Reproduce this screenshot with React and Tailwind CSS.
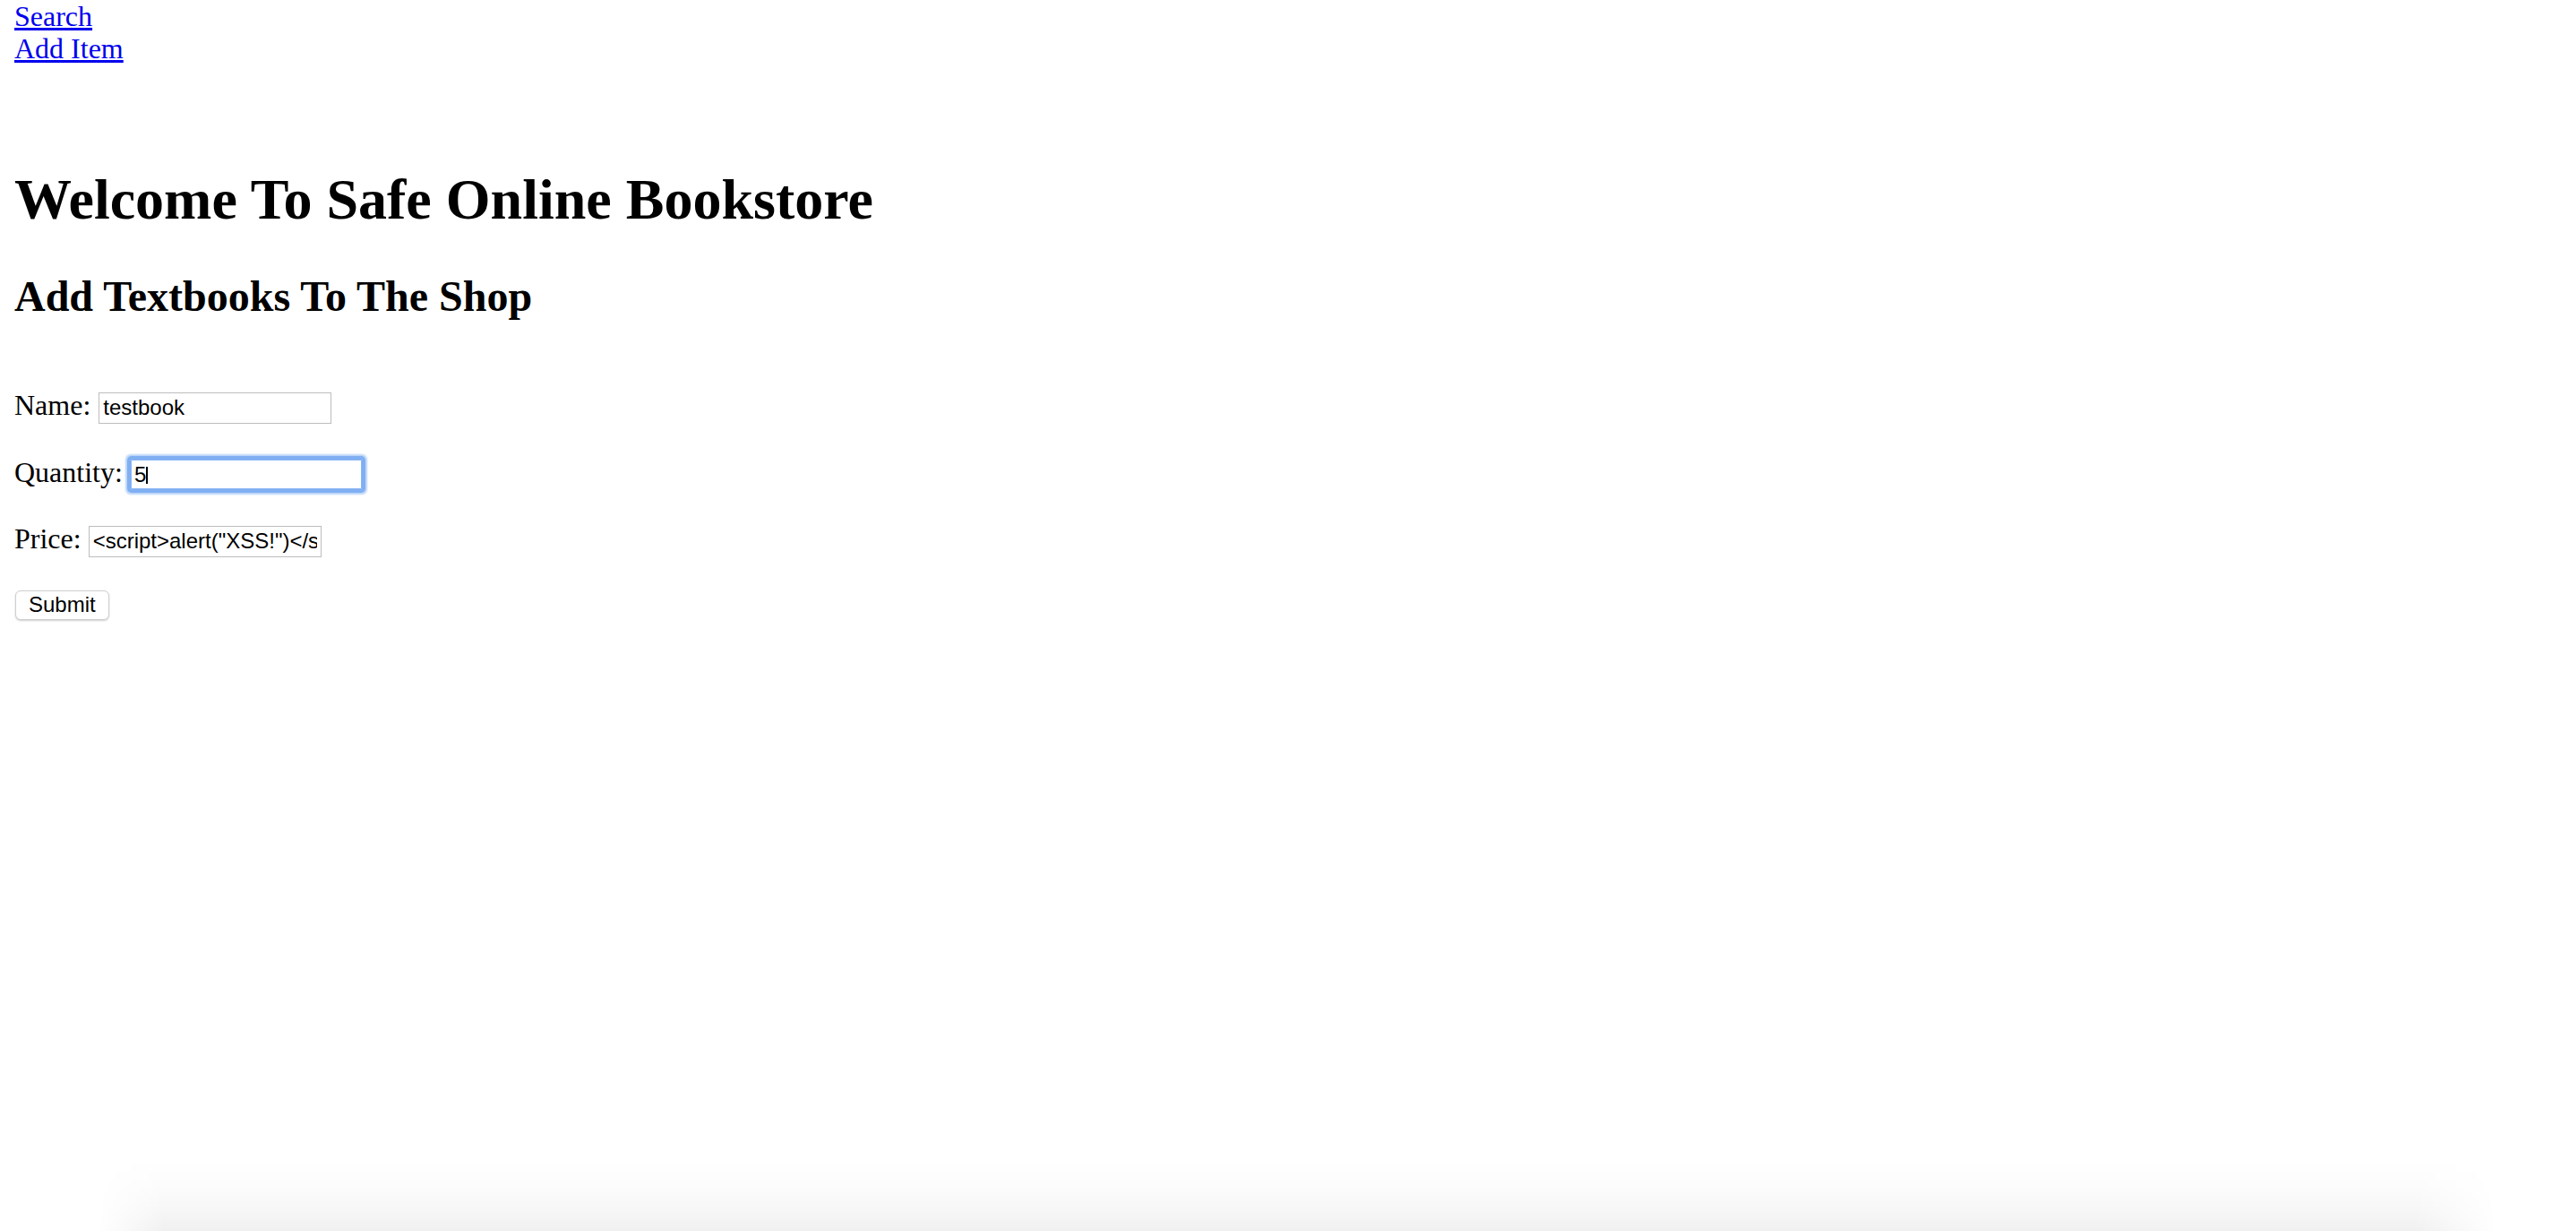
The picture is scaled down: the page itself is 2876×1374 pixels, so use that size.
import React from "react";

export default function App() {
  const inputBase =
    "w-[260px] h-[35px] border border-[#bdbdbd] bg-white px-[4px] py-0 text-[24px] text-black font-['Liberation_Sans',Arial,sans-serif] outline-none";
  return (
    <div className="min-h-screen bg-white pl-[16px] text-black font-['Liberation_Serif','Times_New_Roman',serif]">
      <nav className="flex flex-col items-start text-[32px] leading-[36px]">
        <a href="#" className="text-[#0000ee] underline">
          Search
        </a>
        <a href="#" className="text-[#0000ee] underline">
          Add Item
        </a>
      </nav>

      <h1 className="mt-[114px] text-[64px] font-bold leading-[74px]">
        Welcome To Safe Online Bookstore
      </h1>
      <h2 className="mt-[43px] text-[48px] font-bold leading-[55px]">
        Add Textbooks To The Shop
      </h2>

      <form className="mt-[76px] flex flex-col items-start" onSubmit={(e) => e.preventDefault()}>
        <div className="flex items-baseline gap-[9px]">
          <span className="text-[32px] leading-[36px]">Name:</span>
          <input type="text" readOnly defaultValue="testbook" className={inputBase} />
        </div>

        <div className="mt-[36px] flex items-baseline gap-[8px]">
          <span className="text-[32px] leading-[36px]">Quantity:</span>
          <div className="relative flex items-baseline">
            <input
              type="text"
              readOnly
              defaultValue="5"
              className="w-[260px] h-[35px] rounded-[2px] border border-[#7eaef2] bg-white px-[4px] py-0 text-[24px] text-black font-['Liberation_Sans',Arial,sans-serif] outline-none shadow-[inset_0_0_0_1px_#8ab6f3,0_0_0_3px_#80aff2,0_0_2px_5px_#b9d4f8]"
            />
            <span className="absolute left-[18px] top-[9px] h-[19px] w-[2px] bg-black" />
          </div>
        </div>

        <div className="mt-[36px] flex items-baseline gap-[8px]">
          <span className="text-[32px] leading-[36px]">Price:</span>
          <input
            type="text"
            readOnly
            defaultValue={'<script>alert("XSS!")</script>'}
            className={inputBase}
          />
        </div>

        <button
          type="submit"
          className="mt-[37px] ml-[1px] h-[33px] px-[14px] border border-[#cfcfcf] rounded-[6px] bg-white text-[24px] leading-none text-black font-['Liberation_Sans',Arial,sans-serif] shadow-[0_1px_2px_rgba(0,0,0,0.2)]"
        >
          Submit
        </button>
      </form>

      <div className="pointer-events-none fixed bottom-0 left-[110px] right-[88px] h-[80px] bg-[linear-gradient(to_bottom,rgba(0,0,0,0),rgba(0,0,0,0.012)_35%,rgba(0,0,0,0.03)_70%,rgba(0,0,0,0.06))] [mask-image:linear-gradient(to_right,transparent,black_73px,black_calc(100%-92px),transparent)]" />
    </div>
  );
}
